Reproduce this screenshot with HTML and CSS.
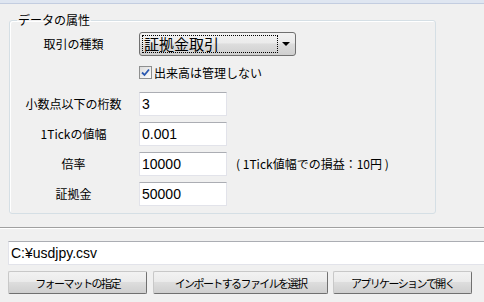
FILE: index.html
```html
<!DOCTYPE html>
<html lang="ja">
<head>
    <meta charset="UTF-8">
    <title>データの属性</title>
    <link rel="stylesheet" href="styles.css">
</head>
<body>
    <div class="topbar"></div>

    <fieldset class="group">
        <legend>データの属性</legend>

        <div class="row row-combo">
            <span class="label">取引の種類</span>
            <div class="combo">
                <span class="combo-text">証拠金取引</span>
                <span class="combo-arrow"></span>
            </div>
        </div>

        <div class="row row-check">
            <span class="label"></span>
            <label class="check">
                <span class="check-box">
                    <svg width="9" height="9" viewBox="0 0 9 9">
                        <path d="M1 4.5 L3.5 7 L8 1.5" fill="none" stroke="#2a58b0" stroke-width="1.8"/>
                    </svg>
                </span>
                出来高は管理しない
            </label>
        </div>

        <div class="row">
            <span class="label">小数点以下の桁数</span>
            <div class="field">3</div>
        </div>

        <div class="row">
            <span class="label">1Tickの値幅</span>
            <div class="field">0.001</div>
        </div>

        <div class="row">
            <span class="label">倍率</span>
            <div class="field">10000</div>
            <span class="note">(&nbsp;1Tick値幅での損益：10円&nbsp;)</span>
        </div>

        <div class="row">
            <span class="label">証拠金</span>
            <div class="field">50000</div>
        </div>
    </fieldset>

    <div class="separator"></div>

    <div class="path">C:¥usdjpy.csv</div>

    <div class="buttons">
        <button class="btn btn-format">フォーマットの指定</button>
        <button class="btn btn-import">インポートするファイルを選択</button>
        <button class="btn btn-open">アプリケーションで開く</button>
    </div>
</body>
</html>
```

FILE: styles.css
```css
body {
    margin: 0;
    background-color: #f0f0f0;
    color: #000;
    font-family: "Noto Sans CJK JP", "DejaVu Sans", sans-serif;
    font-size: 12px;
}

.topbar {
    height: 3px;
    background-color: #dfe6f1;
    border-bottom: 1px solid #c3cde0;
}

.group {
    margin: 8px 48px 0 9px;
    padding: 0 0 7px 0;
    border: 1px solid #d5dfe5;
    border-radius: 3px;
    box-shadow: inset 1px 1px 0 #fff;
}

.group legend {
    margin-left: 7px;
    padding: 0 1px;
    font-size: 12px;
    line-height: 16px;
}

.row {
    display: flex;
    align-items: center;
    height: 24px;
    margin-top: 6px;
}

.row-combo {
    margin-top: 4px;
}

.row-check {
    height: 13px;
    margin: 10px 0 13px;
}

.label {
    width: 127px;
    flex-shrink: 0;
    text-align: center;
    line-height: 16px;
}

.combo {
    position: relative;
    width: 155px;
    height: 22px;
    margin-left: 2px;
    border: 1px solid #707070;
    border-radius: 3px;
    background: linear-gradient(#f2f2f2 0%, #ebebeb 45%, #dddddd 50%, #cfcfcf 100%);
}

.combo-text {
    position: absolute;
    left: 2px;
    top: 2px;
    width: 133px;
    height: 16px;
    border: 1px dotted #000;
    font-size: 15px;
    line-height: 16px;
    padding-left: 1px;
}

.combo-arrow {
    position: absolute;
    right: 5px;
    top: 9px;
    border-left: 4px solid transparent;
    border-right: 4px solid transparent;
    border-top: 4px solid #000;
}

.check {
    display: flex;
    align-items: center;
    gap: 2px;
    margin-left: 2px;
    line-height: 14px;
}

.check-box {
    display: flex;
    align-items: center;
    justify-content: center;
    width: 11px;
    height: 11px;
    border: 1px solid #8e8f8f;
    background: linear-gradient(135deg, #dcdcdc, #fdfdfd);
}

.field {
    width: 84px;
    height: 22px;
    margin-left: 2px;
    padding-left: 2px;
    background-color: #fff;
    border: 1px solid #e2e3ea;
    border-top-color: #abadb3;
    font-family: "Liberation Sans", sans-serif;
    font-size: 14px;
    line-height: 22px;
}

.note {
    margin-left: 9px;
    line-height: 16px;
}

.separator {
    margin-top: 13px;
    border-top: 1px solid #a0a0a0;
    border-bottom: 1px solid #fff;
}

.path {
    height: 22px;
    margin: 12px 0 0 8px;
    padding-left: 2px;
    background-color: #fff;
    border: 1px solid #e2e3ea;
    border-top-color: #abadb3;
    border-right: none;
    font-family: "Liberation Sans", sans-serif;
    font-size: 14px;
    line-height: 22px;
}

.buttons {
    display: flex;
    margin: 6px 0 0 8px;
}

.btn {
    height: 23px;
    padding: 0;
    border: 1px solid #707070;
    border-top-color: #c8c8c8;
    border-left-color: #c8c8c8;
    border-radius: 2px;
    background: linear-gradient(#f2f2f2 0%, #ebebeb 45%, #dddddd 50%, #cfcfcf 100%);
    font-family: "Noto Sans CJK JP", sans-serif;
    font-size: 11px;
    letter-spacing: -1.6px;
    white-space: nowrap;
    color: #000;
}

.btn-format {
    width: 139px;
}

.btn-import {
    width: 175px;
    margin-left: 6px;
}

.btn-open {
    width: 139px;
    margin-left: 5px;
}
```
